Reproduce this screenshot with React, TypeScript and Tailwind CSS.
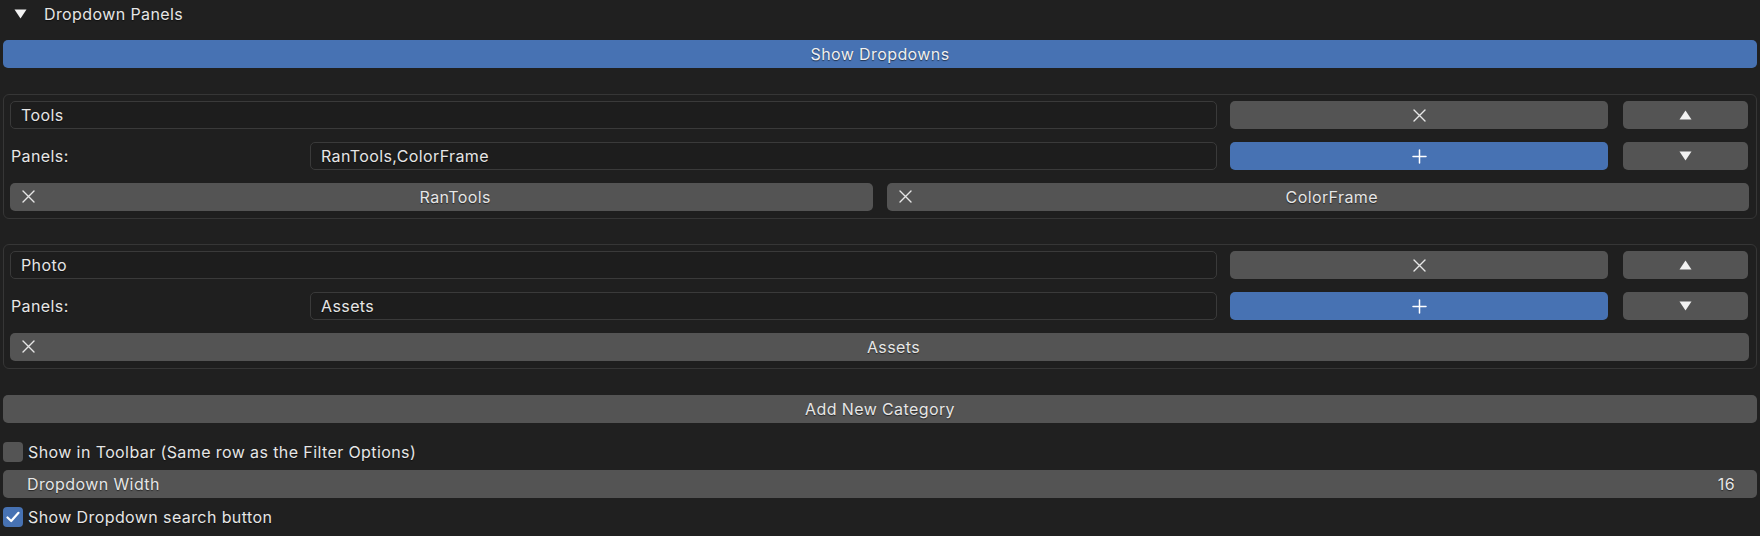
import React from "react";

const XIcon = () => (
  <svg width="13" height="13" viewBox="0 0 13 13" className="shrink-0">
    <path d="M1 1 L12 12 M12 1 L1 12" stroke="#e6e6e6" strokeWidth="1.4" strokeLinecap="round" />
  </svg>
);

const PlusIcon = () => (
  <svg width="15" height="15" viewBox="0 0 15 15" className="shrink-0">
    <path d="M7.5 1 V14 M1 7.5 H14" stroke="#ffffff" strokeWidth="1.5" strokeLinecap="round" />
  </svg>
);

const UpTri = () => (
  <svg width="13" height="10" viewBox="0 0 13 10">
    <path d="M6.5 0.5 L12.5 9.5 L0.5 9.5 Z" fill="#f2f2f2" />
  </svg>
);

const DownTri = () => (
  <svg width="13" height="10" viewBox="0 0 13 10">
    <path d="M0.5 0.5 L12.5 0.5 L6.5 9.5 Z" fill="#f2f2f2" />
  </svg>
);

const shadow = "[text-shadow:0_1px_1px_rgba(0,0,0,0.55)]";

function Btn({ children, blue, className = "" }: { children?: React.ReactNode; blue?: boolean; className?: string }) {
  return (
    <div
      className={`h-[28px] rounded-[5px] flex items-center justify-center ${
        blue ? "bg-[#4772b3]" : "bg-[#545454]"
      } ${className}`}
    >
      {children}
    </div>
  );
}

function Field({ text, className = "" }: { text: string; className?: string }) {
  return (
    <div
      className={`h-[28px] rounded-[5px] bg-[#1d1d1d] border border-[#3a3a3a] flex items-center pl-[10px] ${className}`}
    >
      <span className={shadow}>{text}</span>
    </div>
  );
}

function PanelButton({ label, className = "" }: { label: string; className?: string }) {
  return (
    <div className={`h-[28px] rounded-[5px] bg-[#545454] flex items-center relative ${className}`}>
      <div className="absolute left-[12px] top-[7px]">
        <XIcon />
      </div>
      <div className={`w-full text-center pl-[28px] ${shadow}`}>{label}</div>
    </div>
  );
}

function Category({ name, panels, buttons }: { name: string; panels: string; buttons: string[] }) {
  return (
    <div className="border border-[#363636] rounded-[6px] bg-[#1f1f1f] pt-[6px] pb-[7px] pl-[6px] pr-[7px] flex flex-col gap-[13px]">
      <div className="flex">
        <Field text={name} className="w-[1207px]" />
        <Btn className="w-[378px] ml-[13px]">
          <XIcon />
        </Btn>
        <Btn className="w-[125px] ml-[15px]">
          <UpTri />
        </Btn>
      </div>
      <div className="flex">
        <div className={`w-[300px] pl-[1px] flex items-center ${shadow}`}>Panels:</div>
        <Field text={panels} className="w-[907px]" />
        <Btn blue className="w-[378px] ml-[13px]">
          <PlusIcon />
        </Btn>
        <Btn className="w-[125px] ml-[15px]">
          <DownTri />
        </Btn>
      </div>
      <div className="flex gap-[14px]">
        {buttons.map((b) => (
          <PanelButton key={b} label={b} className="flex-1" />
        ))}
      </div>
    </div>
  );
}

export default function App() {
  return (
    <div
      className="w-[1760px] h-[536px] bg-[#202020] text-[#e6e6e6] text-[16px] tracking-[0.4px] overflow-hidden pl-[3px] pr-[3px]"
      style={{ fontFamily: "Inter, 'Noto Sans', sans-serif" }}
    >
      <div className="h-[40px] flex items-start pt-[5px]">
        <div className="w-[41px] pl-[11px] pt-[4px]">
          <DownTri />
        </div>
        <div className={`${shadow} leading-[18px]`}>Dropdown Panels</div>
      </div>
      <Btn blue className={`w-full ${shadow} text-[#f0f0f0]`}>Show Dropdowns</Btn>
      <div className="mt-[26px]">
        <Category name="Tools" panels="RanTools,ColorFrame" buttons={["RanTools", "ColorFrame"]} />
      </div>
      <div className="mt-[25px]">
        <Category name="Photo" panels="Assets" buttons={["Assets"]} />
      </div>
      <Btn className={`w-full mt-[26px] ${shadow}`}>Add New Category</Btn>
      <div className="mt-[19px] flex items-center h-[20px]">
        <div className="w-[20px] h-[20px] rounded-[4px] bg-[#545454]" />
        <span className={`ml-[5px] ${shadow}`}>Show in Toolbar (Same row as the Filter Options)</span>
      </div>
      <div className="mt-[8px] h-[28px] rounded-[5px] bg-[#545454] flex items-center justify-between pl-[24px] pr-[22px]">
        <span className={shadow}>Dropdown Width</span>
        <span className={shadow}>16</span>
      </div>
      <div className="mt-[9px] flex items-center h-[20px]">
        <div className="w-[20px] h-[20px] rounded-[4px] bg-[#4772b3] flex items-center justify-center">
          <svg width="14" height="12" viewBox="0 0 14 12">
            <path d="M1.5 6.5 L5.2 10 L12.5 1.8" stroke="#ffffff" strokeWidth="2.2" fill="none" strokeLinecap="round" strokeLinejoin="round" />
          </svg>
        </div>
        <span className={`ml-[5px] ${shadow}`}>Show Dropdown search button</span>
      </div>
    </div>
  );
}
